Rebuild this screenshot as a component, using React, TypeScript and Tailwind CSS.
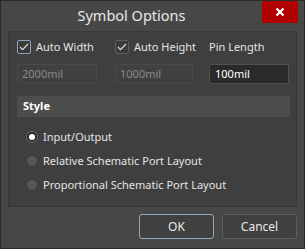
import { useState } from 'react';

function Check({ checked, focused, label }: { checked: boolean; focused?: boolean; label: string }) {
  return (
    <label className="flex items-center gap-[5px]">
      <span className={`flex h-[14px] w-[14px] items-center justify-center rounded-[2px] border bg-[#3a3a3a] ${focused ? 'border-[#8aa6bf]' : 'border-[#5c5c5c]'}`}>
        {checked && (
          <svg width="10" height="8" viewBox="0 0 10 8" fill="none">
            <path d="M1 4l2.6 2.6L9 1" stroke="#dcdcdc" strokeWidth="1.2" />
          </svg>
        )}
      </span>
      <span>{label}</span>
    </label>
  );
}

function Radio({ on, label, onClick }: { on: boolean; label: string; onClick: () => void }) {
  return (
    <div className="flex h-[24px] items-center gap-[5px] cursor-default" onClick={onClick}>
      <span className={`flex h-[12px] w-[12px] items-center justify-center rounded-full border ${on ? 'border-[#6a6a6a] bg-[#2c2c2c]' : 'border-[#3a3a3a] bg-[#575757]'}`}>
        {on && <span className="h-[6px] w-[6px] rounded-full bg-white" />}
      </span>
      <span>{label}</span>
    </div>
  );
}

export default function App() {
  const [style, setStyle] = useState(0);
  const opts = ['Input/Output', 'Relative Schematic Port Layout', 'Proportional Schematic Port Layout'];

  return (
    <div className="flex h-[249px] w-[305px] flex-col border border-[#2a2a2a] bg-[#474747] text-[11px] text-[#e4e4e4]" style={{ fontFamily: '"Noto Sans", sans-serif' }}>
      <div className="flex h-[30px]">
        <div className="flex-1 pt-[4px] text-center text-[14.5px] text-[#e8e8e8]">Symbol Options</div>
        <div className="mr-[6px] flex h-[22px] w-[36px] items-center justify-center bg-[#b00000]">
          <svg width="10" height="10" viewBox="0 0 10 10">
            <path d="M1.5 1.5l7 7M8.5 1.5l-7 7" stroke="#fff" strokeWidth="2.2" />
          </svg>
        </div>
      </div>

      <div className="ml-[7px] flex h-[176px] w-[289px] flex-col border border-[#383838] bg-[#3f3f3f] pl-[8px] pt-[7px]">
        <div className="flex h-[16px] items-center">
          <div className="w-[98px]"><Check checked focused label="Auto Width" /></div>
          <div className="w-[94px]"><Check checked label="Auto Height" /></div>
          <div>Pin Length</div>
        </div>
        <div className="mt-[9px] flex">
          <div className="flex h-[20px] w-[80px] items-center rounded-[2px] border border-[#4a4a4a] bg-[#404040] pl-[4px] text-[#8a8a8a]">2000mil</div>
          <div className="ml-[18px] flex h-[20px] w-[78px] items-center rounded-[2px] border border-[#4a4a4a] bg-[#404040] pl-[4px] text-[#8a8a8a]">1000mil</div>
          <div className="ml-[16px] flex h-[20px] w-[80px] items-center rounded-[2px] border border-[#505050] bg-[#2a2a2a] pl-[5px] text-white">100mil</div>
        </div>
        <div className="mt-[12px] flex h-[21px] w-[273px] items-center bg-[#4d4d4d] pl-[6px] font-bold text-white">Style</div>
        <div className="mt-[8px] pl-[9px]">
          {opts.map((o, i) => (
            <Radio key={o} on={style === i} label={o} onClick={() => setStyle(i)} />
          ))}
        </div>
      </div>

      <div className="mt-[7px] flex justify-end gap-[8px] pr-[7px]">
        <button className="h-[25px] w-[75px] rounded-[3px] border border-[#8fa9bf] bg-[#404040] text-[12px] text-[#e8e8e8]">OK</button>
        <button className="h-[25px] w-[75px] rounded-[3px] border border-[#5e5e5e] bg-[#404040] text-[12px] text-[#e8e8e8]">Cancel</button>
      </div>
    </div>
  );
}
